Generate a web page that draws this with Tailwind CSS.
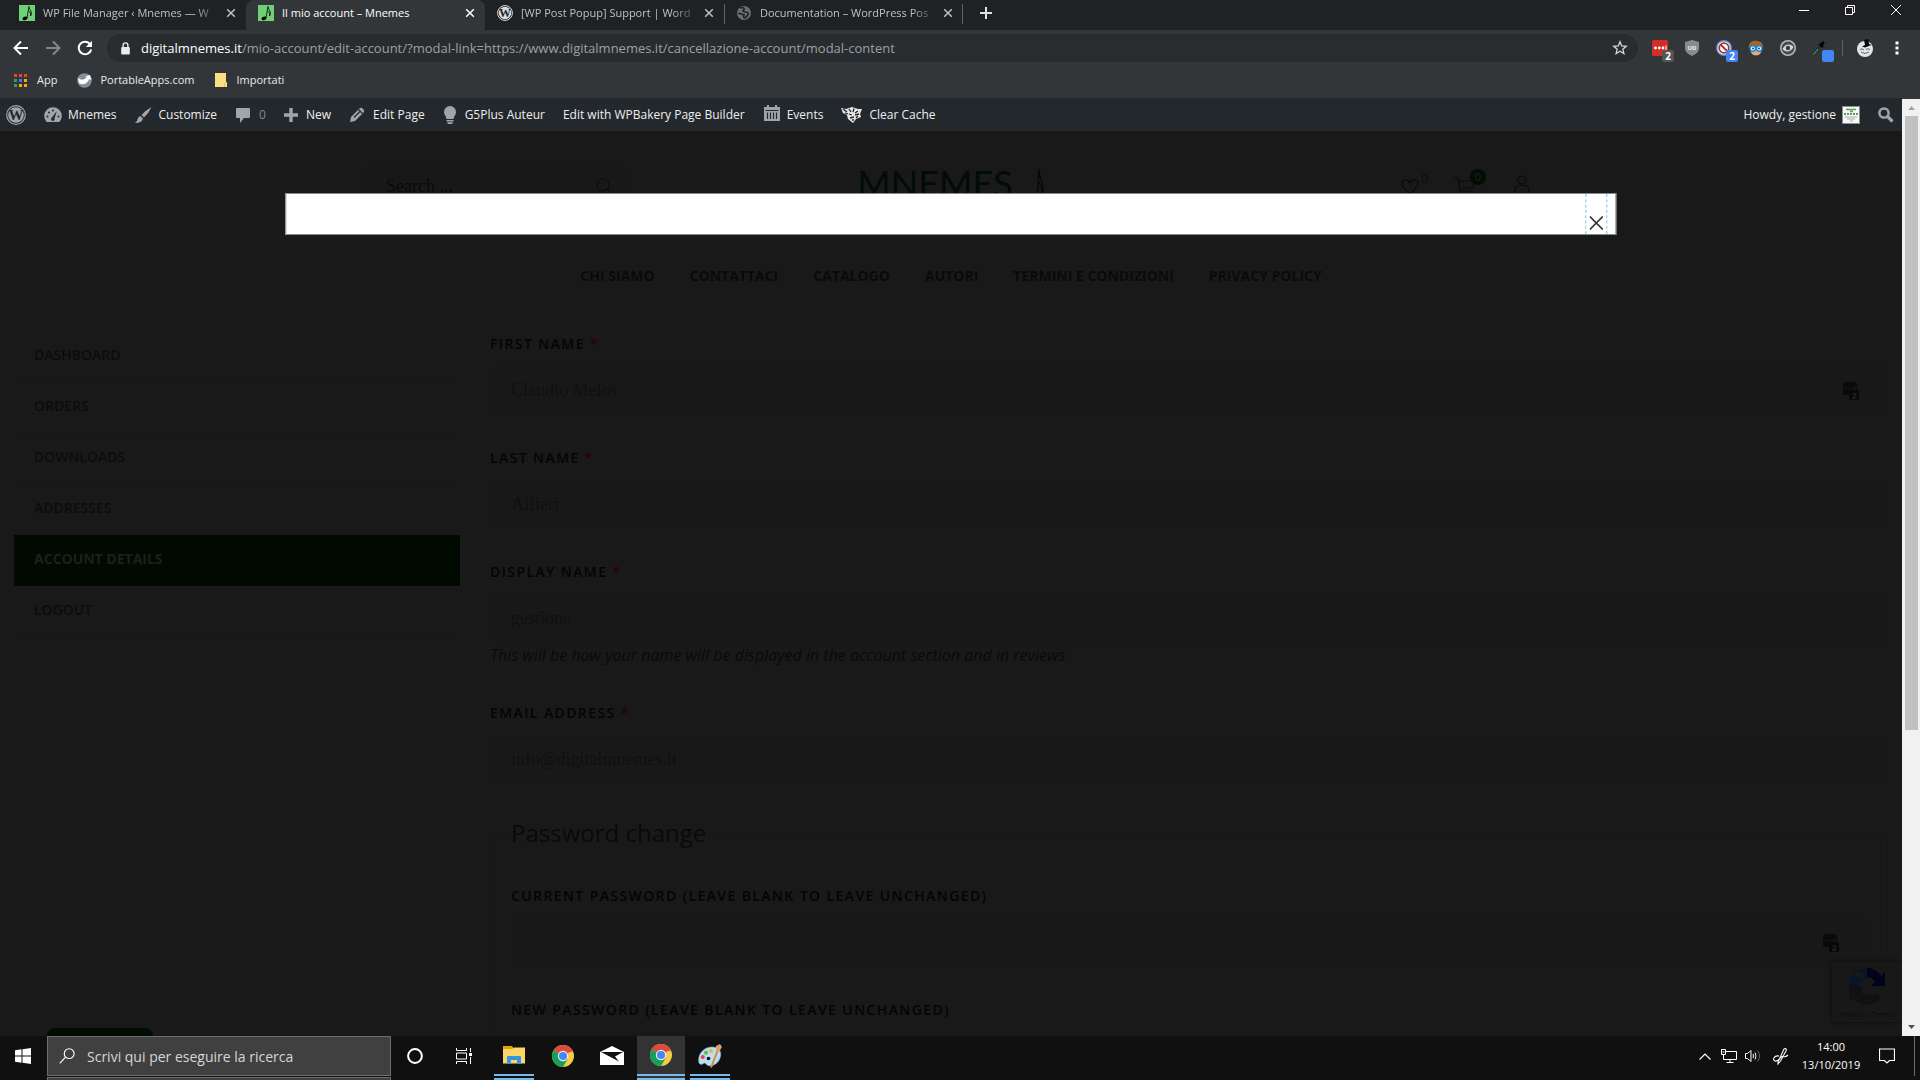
<!DOCTYPE html>
<html lang="it">

<head>
  <meta charset="UTF-8">
  <meta name="viewport" content="width=device-width, initial-scale=1.0">
  <title>Il mio account – Mnemes</title>
  <script src="https://cdn.jsdelivr.net/npm/@tailwindcss/browser@4"></script>
</head>

<body class="h-screen flex flex-col overflow-hidden bg-[#202124] font-['Open_Sans','Noto_Sans',sans-serif]">

  <!-- Shared icons -->
  <svg class="hidden">
    <symbol id="note" viewBox="0 0 16 16">
      <rect width="16" height="16" fill="#6fd076" />
      <ellipse cx="6" cy="13.3" rx="2.6" ry="1.7" fill="#000" transform="rotate(-20 6 13.3)" />
      <path d="M8 13 L10 1.5 C10 5 14 6 11.6 11 C12 7.5 10.6 6.5 9.8 6" fill="none" stroke="#000" stroke-width=".8" />
    </symbol>
    <symbol id="wp" viewBox="0 0 20 20">
      <circle cx="10" cy="10" r="9.3" fill="none" stroke="currentColor" stroke-width="1.2" />
      <circle cx="10" cy="10" r="7.8" fill="currentColor" />
      <text x="10" y="15" text-anchor="middle" font-family="Liberation Serif" font-weight="bold" font-size="15" fill="#23282d">W</text>
    </symbol>
    <symbol id="close" viewBox="0 0 10 10">
      <path d="M1.2 1.2 L8.8 8.8 M8.8 1.2 L1.2 8.8" stroke="currentColor" stroke-width="1.5" fill="none" />
    </symbol>
    <symbol id="chrome" viewBox="0 0 22 22">
      <circle cx="11" cy="11" r="11" fill="#f9cb45" />
      <path d="M11 11 L1.47 5.5 A11 11 0 0 1 20.53 5.5 Z" fill="#db4a3f" />
      <path d="M11 5.5 H20.53 A11 11 0 0 1 21 6.5 L11 8 Z" fill="#db4a3f" />
      <path d="M11 11 L1.47 5.5 A11 11 0 0 0 11 22 L15.8 13.7 Z" fill="#169f58" />
      <circle cx="11" cy="11" r="5.2" fill="#f1f1f1" />
      <circle cx="11" cy="11" r="4.1" fill="#4587f3" />
    </symbol>
    <symbol id="passkey" viewBox="0 0 17 18">
      <rect x="0" y="0" width="14" height="13" rx="2" fill="#0a0a0a" />
      <path d="M2 6.5 h2 M5.5 6.5 h2 M9 6.5 h1.5 M12 4 v5" stroke="#191919" stroke-width="1.5" />
      <rect x="6" y="8" width="10" height="10" rx="1.5" fill="#080808" />
      <text x="11" y="16.5" text-anchor="middle" font-size="9" font-weight="bold" fill="#222">2</text>
    </symbol>
  </svg>

  <!-- Tab strip -->
  <div class="h-[30px] shrink-0 flex items-stretch pl-[7px] text-[11px] text-[#bdc1c6]">
    <div class="w-[239px] flex items-center pl-3 pr-[5px] pb-1">
      <svg class="size-4 shrink-0"><use href="#note" /></svg>
      <span class="flex-1 ml-2 h-5 leading-5 overflow-hidden whitespace-nowrap mask-r-from-85%">WP File Manager ‹ Mnemes — W</span>
      <button class="size-5 grid place-items-center" aria-label="Close tab"><svg class="size-2.5"><use href="#close" /></svg></button>
    </div>
    <div class="w-[239px] flex items-center pl-3 pr-[5px] pb-1 bg-[#323639] text-white rounded-t-lg">
      <svg class="size-4 shrink-0"><use href="#note" /></svg>
      <span class="flex-1 ml-2 h-5 leading-5 overflow-hidden whitespace-nowrap">Il mio account – Mnemes</span>
      <button class="size-5 grid place-items-center" aria-label="Close tab"><svg class="size-2.5"><use href="#close" /></svg></button>
    </div>
    <div class="w-[239px] flex items-center pl-3 pr-[5px] pb-1">
      <svg class="size-4 shrink-0 text-[#dcdcdc]"><use href="#wp" /></svg>
      <span class="flex-1 ml-2 h-5 leading-5 overflow-hidden whitespace-nowrap mask-r-from-85%">[WP Post Popup] Support | Word</span>
      <button class="size-5 grid place-items-center" aria-label="Close tab"><svg class="size-2.5"><use href="#close" /></svg></button>
    </div>
    <div class="w-[239px] flex items-center pl-3 pr-[5px] pb-1 relative before:absolute before:left-0 before:top-1 before:h-5 before:w-px before:bg-[#5f6368] after:absolute after:right-0 after:top-1 after:h-5 after:w-px after:bg-[#5f6368]">
      <svg class="size-4 shrink-0" viewBox="0 0 16 16">
        <circle cx="8" cy="8" r="7" fill="#6b6e72" />
        <path d="M4 3 C7 2 9 3 8 5 C6 5 7 7 9 7 C13 7 13 9 11 11 C9 14 7 13 8 10 C6 9 4 9 2.5 8" fill="none" stroke="#202124" stroke-width="1.6" />
      </svg>
      <span class="flex-1 ml-2 h-5 leading-5 overflow-hidden whitespace-nowrap mask-r-from-85%">Documentation – WordPress Pos</span>
      <button class="size-5 grid place-items-center" aria-label="Close tab"><svg class="size-2.5"><use href="#close" /></svg></button>
    </div>
    <button class="w-[46px] pb-1 grid place-items-center" aria-label="New tab">
      <svg class="size-3" viewBox="0 0 12 12"><path d="M6 0 V12 M0 6 H12" stroke="#dee1e6" stroke-width="2" /></svg>
    </button>
    <div class="ml-auto flex pb-2.5 pr-px text-white">
      <button class="w-[46px] grid place-items-center" aria-label="Minimize"><svg class="size-2.5" viewBox="0 0 10 10"><path d="M0 5.5 H10" stroke="#fff" /></svg></button>
      <button class="w-[46px] grid place-items-center" aria-label="Restore"><svg class="size-2.5" viewBox="0 0 10 10"><path d="M.5 2.5 H7.5 V9.5 H.5 Z M2.5 2.5 V.5 H9.5 V7.5 H7.5" fill="none" stroke="#fff" /></svg></button>
      <button class="w-[46px] grid place-items-center" aria-label="Close"><svg class="size-2.5" viewBox="0 0 10 10"><path d="M0 0 L10 10 M10 0 L0 10" stroke="#fff" /></svg></button>
    </div>
  </div>

  <!-- Address bar -->
  <div class="h-[34px] shrink-0 flex items-center bg-[#323639] pl-[5px] pr-[7px] pt-1 pb-0.5">
    <button class="w-8 grid place-items-center" aria-label="Back"><svg class="size-4" viewBox="0 0 16 16"><path d="M15 8 H2 M8 1.5 L1.5 8 L8 14.5" fill="none" stroke="#fff" stroke-width="2" /></svg></button>
    <button class="w-8 grid place-items-center" aria-label="Forward"><svg class="size-4" viewBox="0 0 16 16"><path d="M1 8 H14 M8 1.5 L14.5 8 L8 14.5" fill="none" stroke="#85888b" stroke-width="2" /></svg></button>
    <button class="w-8 grid place-items-center" aria-label="Reload"><svg class="size-4" viewBox="0 0 16 16"><path d="M14.2 9.5 A6.3 6.3 0 1 1 12.8 3.8" fill="none" stroke="#fff" stroke-width="2" /><path d="M15 .8 V7 H8.8 Z" fill="#fff" /></svg></button>
    <div class="flex-1 ml-1.5 h-7 rounded-full bg-[#282c2f] flex items-center pl-[13px] pr-2.5">
      <svg class="w-[11px] h-[13px]" viewBox="0 0 10 12"><rect x="1" y="4.5" width="8" height="7" rx="1" fill="#e8eaed" /><path d="M2.8 5 V3 A2.2 2.2 0 0 1 7.2 3 V5" fill="none" stroke="#e8eaed" stroke-width="1.3" /></svg>
      <a href="#" class="flex-1 ml-2.5 text-[13px] leading-5 text-[#9aa0a6] whitespace-nowrap"><span class="text-white">digitalmnemes.it</span>/mio-account/edit-account/?modal-link=https://www.digitalmnemes.it/cancellazione-account/modal-content</a>
      <button aria-label="Bookmark"><svg class="size-4" viewBox="0 0 16 16"><path d="M8 1.8 L9.7 6 L14.2 6.3 L10.8 9.2 L11.9 13.7 L8 11.2 L4.1 13.7 L5.2 9.2 L1.8 6.3 L6.3 6 Z" fill="none" stroke="#d4d7da" stroke-width="1.3" /></svg></button>
    </div>
    <div class="flex items-center ml-1.5">
      <button class="w-8 relative grid place-items-center" aria-label="LastPass">
        <svg class="size-4" viewBox="0 0 16 16"><rect width="16" height="16" rx="1.5" fill="#d32d27" /><circle cx="3.5" cy="8" r="1.4" fill="#fff" /><circle cx="7.3" cy="8" r="1.4" fill="#fff" /><circle cx="11" cy="8" r="1.4" fill="#fff" /><path d="M14 5.5 V10.5" stroke="#fff" /></svg>
        <span class="absolute left-[18px] top-2.5 size-3 rounded-xs bg-[#555] text-white text-[10px] leading-3 font-bold text-center">2</span>
      </button>
      <button class="w-8 grid place-items-center" aria-label="uBlock">
        <svg class="size-4" viewBox="0 0 16 16"><path d="M8 0 L15 2 V8 C15 12 12 14 8 16 C4 14 1 12 1 8 V2 Z" fill="#8a8a8a" /><text x="8" y="9.5" text-anchor="middle" font-size="6" font-weight="bold" fill="#eee">UD</text></svg>
      </button>
      <button class="w-8 relative grid place-items-center" aria-label="Blocker">
        <svg class="size-4" viewBox="0 0 16 16"><circle cx="8" cy="8" r="8" fill="#4a90d9" /><circle cx="8" cy="8" r="6.6" fill="#fff" /><circle cx="8" cy="8" r="4.8" fill="none" stroke="#a8322c" stroke-width="1.8" /><path d="M4.5 4.5 L11.5 11.5" stroke="#a8322c" stroke-width="1.8" /></svg>
        <span class="absolute left-[18px] top-2.5 size-3 rounded-xs bg-[#4285f4] text-white text-[10px] leading-3 font-bold text-center">2</span>
      </button>
      <button class="w-8 grid place-items-center" aria-label="Glasses">
        <svg class="size-4" viewBox="0 0 16 16"><path d="M1 8 C0 2 5 0 9 1 C14 1 16 5 14.5 9 Z" fill="#a5661f" /><path d="M2 7 H14 C14 12 12 15.5 8 15.5 C4 15.5 2 12 2 7Z" fill="#e3a987" /><circle cx="4.8" cy="8.5" r="2.7" fill="#fff" stroke="#1b87d6" stroke-width="1.4" /><circle cx="11.2" cy="8.5" r="2.7" fill="#fff" stroke="#1b87d6" stroke-width="1.4" /><circle cx="5" cy="8.5" r="1" fill="#114f80" /><circle cx="11" cy="8.5" r="1" fill="#114f80" /></svg>
      </button>
      <button class="w-8 grid place-items-center" aria-label="Eye">
        <svg class="size-4" viewBox="0 0 16 16"><circle cx="8" cy="8" r="8" fill="#b9b9b9" /><circle cx="8" cy="8" r="6.5" fill="#4a4a4a" /><path d="M2.5 9 C5 3.5 11 3.5 13.5 7 C11 12.5 5 12.5 2.5 9Z" fill="#d6d6d6" /><circle cx="8" cy="8" r="2.2" fill="#3a3a3a" /></svg>
      </button>
      <button class="w-8 relative grid place-items-center" aria-label="Color picker">
        <svg class="size-4" viewBox="0 0 16 16"><path d="M1.5 14 L9 5" stroke="#123d22" stroke-width="2.2" /><path d="M1.5 14.5 L6 9" stroke="#4cae6b" /><path d="M7.5 4 L11 7 M9 5 L12 2" stroke="#000" stroke-width="2.5" /></svg>
        <span class="absolute left-[18px] top-2.5 size-3 rounded-xs bg-[#4285f4]"></span>
      </button>
      <span class="ml-1.5 w-px h-4 bg-[#5f6368]"></span>
      <button class="ml-1.5 w-8 grid place-items-center" aria-label="Profile">
        <svg class="size-[18px]" viewBox="0 0 18 18"><circle cx="9" cy="10" r="8" fill="#e4e4e4" /><path d="M8 1 L12.500 0 L13 5 L15.500 6 L9 8.500 L6 7.500 L9 6 Z" fill="#050505" /><path d="M4 10.5 Q6 9 8 11 M10 10.5 Q12 9 14 10.5 M5 13 Q9 16 13 13" fill="none" stroke="#666" /></svg>
      </button>
      <button class="w-8 grid place-items-center" aria-label="Menu">
        <svg class="w-1 h-3.5" viewBox="0 0 4 14"><path d="M.5 .5h3v3h-3z M.5 5.5h3v3h-3z M.5 10.5h3v3h-3z" fill="#fff" /></svg>
      </button>
    </div>
  </div>

  <!-- Bookmarks -->
  <div class="h-[34px] shrink-0 flex items-center gap-5 bg-[#323639] pl-3.5 pb-0.5 text-[11px] text-[#e8eaed]">
    <a href="#" class="flex items-center gap-2.5">
      <svg class="size-[13px]" viewBox="0 0 13 13"><path d="M0 0h3v3h-3z M5 0h3v3h-3z M10 0h3v3h-3z" fill="#ea4335" /><path d="M0 5h3v3h-3z M0 10h3v3h-3z" fill="#34a05a" /><path d="M5 5h3v3h-3z" fill="#2684fc" /><path d="M10 5h3v3h-3z M5 10h3v3h-3z M10 10h3v3h-3z" fill="#f9ab00" /></svg>App</a>
    <a href="#" class="flex items-center gap-2">
      <svg class="size-[15px]" viewBox="0 0 15 15"><circle cx="7.5" cy="7.5" r="7.3" fill="#83909b" /><path d="M1 5 Q6 9 10 4 L8 3.5 L13 2 L14.5 7 L12.5 6 Q8 14 2 10 Z" fill="#fff" /></svg>PortableApps.com</a>
    <a href="#" class="flex items-center gap-2.5">
      <svg class="w-3 h-3.5" viewBox="0 0 12 14"><path d="M0 0 H11 V9 H12 V14 H0 Z" fill="#fbdf83" /><path d="M11 9 L9.5 11.5 V14" stroke="#e5b93c" fill="none" /></svg>Importati</a>
  </div>

  <!-- Viewport -->
  <div class="flex-1 min-h-0 flex">
    <div class="flex-1 min-w-0 flex flex-col">

      <!-- Admin bar -->
      <nav class="h-[33px] shrink-0 flex items-center bg-[#23282d] text-[#eee] text-xs pt-px pl-1.5 pr-2 gap-[18px] whitespace-nowrap">
        <a href="#" aria-label="WordPress"><svg class="size-5 text-[#a0a5aa]"><use href="#wp" /></svg></a>
        <a href="#" class="flex items-center gap-1.5">
          <svg class="size-[18px]" viewBox="0 0 18 18"><path d="M2.5 16 A8.8 8.8 0 1 1 15.5 16 Z" fill="#a0a5aa" /><g fill="#23282d"><circle cx="3.5" cy="10.5" r="1" /><circle cx="5" cy="6.5" r="1" /><circle cx="9" cy="4.5" r="1" /><circle cx="14.5" cy="10.5" r="1" /><path d="M12.8 5 L10.5 12.5 A1.8 1.8 0 1 1 8 11.5 Z" /></g></svg>Mnemes</a>
        <a href="#" class="flex items-center gap-1.5">
          <svg class="size-[18px]" viewBox="0 0 18 18"><path d="M17.5 1 Q12 4 7.5 9 L10 11.5 Q15 7 17.5 1 Z M6.5 10 L9 12.5 Q8 17 1 17 Q3.5 15 3.8 12.5 Q4.5 10 6.5 10Z" fill="#a0a5aa" /></svg>Customize</a>
        <a href="#" class="flex items-center gap-2 text-[#85898d]">
          <svg class="size-4" viewBox="0 0 16 16"><path d="M2 1 H14 Q15 1 15 2 V10 Q15 11 14 11 H9 L5 16 V11 H2 Q1 11 1 10 V2 Q1 1 2 1Z" fill="#a0a5aa" /></svg>0</a>
        <a href="#" class="flex items-center gap-2">
          <svg class="size-3.5" viewBox="0 0 14 14"><path d="M7 0 V14 M0 7 H14" stroke="#a0a5aa" stroke-width="3.4" /></svg>New</a>
        <a href="#" class="flex items-center gap-2">
          <svg class="size-4" viewBox="0 0 16 16"><path d="M1 15 L2 10 L10.5 1.5 Q12 0 14 2 Q16 4 14.5 5.5 L6 14 Z" fill="#a0a5aa" /><path d="M5 10.5 L11 4.5 M9.5 2.5 L13.5 6.5" stroke="#23282d" stroke-width="1.2" /></svg>Edit Page</a>
        <a href="#" class="flex items-center gap-2">
          <svg class="w-3.5 h-[18px]" viewBox="0 0 14 18"><path d="M7 0 A6 6 0 0 1 13 6 Q13 8.5 11.5 10 L10.5 13 H3.5 L2.5 10 Q1 8.5 1 6 A6 6 0 0 1 7 0Z M3.5 14 H10.5 V15.5 H3.5Z M4.5 16.3 H9.5 V18 H4.5Z" fill="#a0a5aa" /></svg>G5Plus Auteur</a>
        <a href="#">Edit with WPBakery Page Builder</a>
        <a href="#" class="flex items-center gap-1.5">
          <svg class="size-[18px] mb-1" viewBox="0 0 18 18"><path d="M1 3 H17 V17 H1 Z M4 1 H6 V4 H4Z M12 1 H14 V4 H12Z" fill="#a0a5aa" /><path d="M2.5 6.5 H15.5 M4.5 8.5 V15 M7.5 8.5 V15 M10.5 8.5 V15 M13.5 8.5 V15" stroke="#23282d" stroke-width="1.2" /></svg>Events</a>
        <a href="#" class="flex items-center gap-1.5">
          <svg class="w-[22px] h-4" viewBox="0 0 22 16"><path d="M0 1 L5 2 L11 0 L17 2 L21 2 L19 7 L20 10 L15 12 L12 16 L7 12 L6 8 L2 6 Z" fill="#e6e6e6" /><path d="M2 2 L6 5 M8 2 L10 5 M13 1.5 L12 5 M17 4 L14 6 M8 7 L11 8 M14 8 L18 7 M9 11 L13 10 M11 13 L13 13 M4 6 L7 7 M17 9 L15 11" stroke="#222" stroke-width="1.3" /></svg>Clear Cache</a>
        <a href="#" class="ml-auto flex items-center gap-1.5">Howdy, gestione
          <svg class="size-[18px]" viewBox="0 0 18 18"><rect x=".5" y=".5" width="17" height="17" fill="#f4f7f3" stroke="#8c8f94" /><path d="M4 3.5 H14 M8 5.500 H11" stroke="#5f9a5e" stroke-width="1.3" /><path d="M2 8 H16" stroke="#5f9a5e" stroke-width="2" stroke-dasharray="2 1" /><path d="M3 11 H15 M5 13 H13 M8 15 H11" stroke="#999" stroke-width=".8" /></svg></a>
        <button aria-label="Search"><svg class="size-4" viewBox="0 0 16 16"><circle cx="6" cy="6" r="4.6" fill="none" stroke="#a0a5aa" stroke-width="2.5" /><path d="M9.5 9.5 L14.5 14.5" stroke="#a0a5aa" stroke-width="3.2" /></svg></button>
      </nav>

      <!-- Site -->
      <div class="flex-1 min-h-0 relative overflow-hidden bg-[#191919] text-[#0a0a0a]">
        <header class="h-[120px] grid grid-cols-[1fr_auto_1fr] items-start px-[366px]">
          <div class="mt-[31px] w-[260px] h-12 flex items-center bg-[#181818] pl-5 pr-3.5 justify-between">
            <input type="text" aria-label="Search" placeholder="Search ..." class="w-40 bg-transparent outline-none font-['Liberation_Serif',serif] text-lg placeholder:text-[#0a0a0a]">
            <button aria-label="Search"><svg class="size-4" viewBox="0 0 16 16"><circle cx="7" cy="7" r="6" fill="none" stroke="#0a0a0a" /><path d="M11 11 L15.5 15.5" stroke="#0a0a0a" /></svg></button>
          </div>
          <a href="#" class="mt-7 flex items-start gap-5 text-[#020c06]">
            <span class="text-4xl leading-[48px] font-normal font-['Lato',sans-serif]">MNEMES</span>
            <svg class="mt-2.5 w-3 h-12" viewBox="0 0 12 48"><path d="M3 46 L6 0 C6 12 13 16 9 28 C10 18 7 15 5 12" fill="none" stroke="#020c06" stroke-width="1.3" /></svg>
          </a>
          <div class="mt-[42px] justify-self-end flex items-start gap-[26px] pr-1.5">
            <a href="#" aria-label="Wishlist" class="flex items-start text-xs leading-3 gap-0.5"><svg class="mt-1.5 w-[18px] h-4" viewBox="0 0 18 16"><path d="M9 15 C3 10 1 7 1 4.5 C1 .5 7 -.5 9 4 C11 -.5 17 .5 17 4.5 C17 7 15 10 9 15Z" fill="none" stroke="#0a0a0a" stroke-width="1.2" /></svg>0</a>
            <a href="#" aria-label="Cart" class="relative"><svg class="mt-1 w-6 h-5" viewBox="0 0 24 20"><path d="M0 1 H4 L6 14 H19 M4.5 4 H21 L19 11 H5.500" fill="none" stroke="#0a0a0a" stroke-width="1.2" /></svg>
              <span class="absolute left-4 -top-1 size-4 rounded-full bg-[#010c02] text-[#222] text-[11px] leading-4 text-center">0</span></a>
            <a href="#" aria-label="Account" class="ml-2.5"><svg class="mt-0.5 w-4 h-5" viewBox="0 0 16 20"><circle cx="8" cy="5" r="4" fill="none" stroke="#0a0a0a" stroke-width="1.2" /><path d="M.6 18 Q.6 11 5 10.5 H11 Q15.4 11 15.4 18" fill="none" stroke="#0a0a0a" stroke-width="1.2" /></svg></a>
          </div>
        </header>

        <nav class="h-12 flex justify-center items-center gap-[35px] pt-px text-sm font-bold text-[#0a0a0a]">
          <a href="#">CHI SIAMO</a>
          <a href="#">CONTATTACI</a>
          <a href="#">CATALOGO</a>
          <a href="#">AUTORI</a>
          <a href="#">TERMINI E CONDIZIONI</a>
          <a href="#">PRIVACY POLICY</a>
        </nav>

        <div class="flex gap-[30px] px-3.5 pt-8">
          <nav class="w-[446px] shrink-0 flex flex-col text-sm font-semibold text-[#0c0c0c]">
            <a href="#" class="h-[51px] pl-5 leading-[48px] border-b border-[#171717]">DASHBOARD</a>
            <a href="#" class="h-[51px] pl-5 leading-[48px] border-b border-[#171717]">ORDERS</a>
            <a href="#" class="h-[51px] pl-5 leading-[48px] border-b border-[#171717]">DOWNLOADS</a>
            <a href="#" class="h-[51px] pl-5 leading-[48px]">ADDRESSES</a>
            <a href="#" class="h-[51px] pl-5 leading-[48px] bg-[#010a01] font-bold text-[#1d1f1d]">ACCOUNT DETAILS</a>
            <a href="#" class="h-[51px] pl-5 leading-[48px] border-b border-[#171717]">LOGOUT</a>
          </nav>

          <form class="flex-1 flex flex-col text-sm font-semibold text-[#040404]">
            <label for="first-name" class="h-6 leading-[26px] mb-[11px] tracking-widest">FIRST NAME <span class="text-[#2a0000]">*</span></label>
            <div class="relative mb-[31px]">
              <input id="first-name" type="text" value="Claudio Melos" class="block w-full h-12 px-[21px] bg-[#181818] text-[#101010] text-lg font-normal font-['Liberation_Serif',serif]">
              <svg class="absolute right-7 top-4 w-[17px] h-[18px]"><use href="#passkey" /></svg>
            </div>
            <label for="last-name" class="h-6 leading-[26px] mb-[11px] tracking-widest">LAST NAME <span class="text-[#2a0000]">*</span></label>
            <input id="last-name" type="text" value="Alfieri" class="h-12 px-[21px] mb-[31px] bg-[#181818] text-[#101010] text-lg font-normal font-['Liberation_Serif',serif]">
            <label for="display-name" class="h-6 leading-[26px] mb-[11px] tracking-widest">DISPLAY NAME <span class="text-[#2a0000]">*</span></label>
            <input id="display-name" type="text" value="gestione" class="h-12 px-[21px] bg-[#181818] text-[#101010] text-lg font-normal font-['Liberation_Serif',serif]">
            <p class="h-6 leading-[26px] mb-[34px] text-base italic font-normal text-[#0a0a0a]">This will be how your name will be displayed in the account section and in reviews</p>
            <label for="email" class="h-6 leading-[26px] mb-[11px] tracking-widest">EMAIL ADDRESS <span class="text-[#2a0000]">*</span></label>
            <input id="email" type="email" value="info@digitalmnemes.it" class="h-12 px-[21px] bg-[#181818] text-[#101010] text-lg font-normal font-['Liberation_Serif',serif]">
            <fieldset class="mt-[34px] px-5 border border-[#161616] flex flex-col">
              <legend class="h-8 leading-8 mb-[34px] text-2xl font-normal text-[#0a0a0a]">Password change</legend>
              <label for="current-password" class="h-6 leading-[26px] mb-[11px] tracking-widest">CURRENT PASSWORD (LEAVE BLANK TO LEAVE UNCHANGED)</label>
              <div class="relative mb-[31px]">
                <input id="current-password" type="password" class="block w-full h-12 px-[21px] bg-[#181818]">
                <svg class="absolute right-[27px] top-4 w-[17px] h-[18px]"><use href="#passkey" /></svg>
              </div>
              <label for="new-password" class="h-6 leading-[26px] mb-[11px] tracking-widest">NEW PASSWORD (LEAVE BLANK TO LEAVE UNCHANGED)</label>
              <input id="new-password" type="password" class="h-12 px-[21px] bg-[#181818]">
            </fieldset>
          </form>
        </div>

        <!-- Popup -->
        <div role="dialog" aria-label="Popup" class="absolute top-[62px] left-1/2 -translate-x-1/2 w-[70%] h-[42px] bg-white border border-[#8a8a8a] flex justify-end pr-2">
          <button class="w-[22px] border-x border-dashed border-[#7cc4e0] flex items-end justify-center pb-1" aria-label="Close popup">
            <svg class="size-3.5" viewBox="0 0 14 14"><path d="M.5 .5 L13.5 13.5 M13.5 .5 L.5 13.5" stroke="#333" stroke-width="1.7" /></svg>
          </button>
        </div>

        <!-- reCAPTCHA badge -->
        <div class="absolute right-0 bottom-3.5 w-[70px] h-[60px] bg-[#181818] shadow-[0_0_4px_#0a0a0a] text-center">
          <svg class="mx-auto mt-1.5 w-9 h-[38px]" viewBox="0 0 36 38"><path d="M0 18 C0 9 5 1 18 0 V8 L22 10 C16 9 12 12 10 18 Z M5 1 L5 6 L10 10 L16 10 L15 6Z" fill="#071526" /><path d="M18 0 C24 0 29 3 32 8 L36 4 V18 H22 L26 14 C24 10 21 9 18 9 Z" fill="#02021a" /><path d="M0 18 V33 L4 30 C14 40 27 38 32 29 L26 25 C22 29 15 28 12 24 L15 18 Z" fill="#111" /></svg>
          <span class="block pt-0.5 text-[8px] leading-3 text-[#0a0a0a]">Privacy - Terms</span>
        </div>
        <div class="absolute left-[47px] bottom-0 w-[106px] h-2 rounded-t-lg bg-[#010c02]"></div>
      </div>
    </div>

    <!-- Scrollbar -->
    <div class="w-[18px] shrink-0 flex flex-col items-center bg-[#f1f1f1] border-t border-[#323639]">
      <svg class="size-[17px]" viewBox="0 0 17 17"><path d="M5 11 L8.5 7 L12 11Z" fill="#a3a3a3" /></svg>
      <div class="w-[13px] h-[65.5%] bg-[#c1c1c1]"></div>
      <svg class="mt-auto size-[17px]" viewBox="0 0 17 17"><path d="M5 6 L8.5 10 L12 6Z" fill="#505050" /></svg>
    </div>
  </div>

  <!-- Taskbar -->
  <footer class="h-11 shrink-0 flex items-start bg-[#101010] text-white">
    <button class="w-[46px] h-10 grid place-items-center" aria-label="Start">
      <svg class="size-4" viewBox="0 0 16 16"><path d="M0 2.2 L6.5 1.3 V7.5 H0Z M7.5 1.2 L16 0 V7.5 H7.5Z M0 8.5 H6.5 V14.7 L0 13.8Z M7.5 8.5 H16 V16 L7.5 14.8Z" fill="#fff" /></svg>
    </button>
    <div class="w-[345px] pl-px flex flex-col gap-px">
      <label class="h-10 flex items-center bg-[#404040] border border-[#6e6e6e] pl-[11px] gap-3">
        <svg class="size-4" viewBox="0 0 17 17"><circle cx="10.8" cy="6" r="5.2" fill="none" stroke="#fff" stroke-width="1.2" /><path d="M7 9.8 L.8 16.3" stroke="#fff" stroke-width="1.2" /></svg>
        <input type="text" aria-label="Cerca" placeholder="Scrivi qui per eseguire la ricerca" class="flex-1 pt-0.5 bg-transparent outline-none text-sm placeholder:text-[#d6d6d6]">
      </label>
      <span class="h-[3px] bg-[#404040] border-t border-x border-[#6e6e6e]"></span>
    </div>
    <div class="flex gap-px pl-px">
      <button class="w-12 h-10 pr-0.5 grid place-items-center" aria-label="Cortana"><svg class="size-4" viewBox="0 0 16 16"><circle cx="8" cy="8" r="6.9" fill="none" stroke="#fff" stroke-width="2" /></svg></button>
      <button class="w-12 h-10 pr-0.5 grid place-items-center" aria-label="Task view"><svg class="size-4" viewBox="0 0 16 16"><path d="M.5 0 V2.5 H10.5 V0 M.5 5 H10.5 V11 H.5 Z M.5 16 V13.5 H10.5 V16 M14.5 0 V4 M14.5 9 V16" fill="none" stroke="#fff" /><path d="M13 5 h3 v3 h-3z" fill="#fff" /></svg></button>
      <button class="w-12 h-11 flex flex-col items-center justify-end gap-0.5" aria-label="Explorer">
        <svg class="mb-2 w-[22px] h-[18px]" viewBox="0 0 22 18"><path d="M0 0 H9 L10.5 2 H21 V4 H0Z" fill="#e3a008" /><path d="M0 3 H9 L11 1.5 H22 V17.5 H0Z" fill="#fcd667" /><path d="M4 18 V11 Q4 10 5 10 H17 Q18 10 18 11 V18 H14 V14 H8 V18Z" fill="#3a95dc" /></svg>
        <span class="w-10 h-0.5 bg-[#76b9ed]"></span><span class="w-10 h-0.5 bg-[#76b9ed]"></span>
      </button>
      <button class="w-12 h-10 grid place-items-center" aria-label="Chrome"><svg class="size-[22px]"><use href="#chrome" /></svg></button>
      <button class="w-12 h-10 grid place-items-center" aria-label="Mail"><svg class="w-6 h-5" viewBox="0 0 24 20"><path d="M0 6 L12 0 L24 6 V19 H0Z" fill="#fff" /><path d="M1 6 H23 L15 10.5 L19 15.5 Z" fill="#101010" /></svg></button>
      <button class="w-12 h-11 flex flex-col items-center justify-end gap-0.5 bg-[#333]" aria-label="Chrome, active">
        <svg class="mb-1.5 size-[22px]"><use href="#chrome" /></svg>
        <span class="w-12 h-0.5 bg-[#76b9ed]"></span><span class="w-12 h-0.5 bg-[#76b9ed]"></span>
      </button>
      <button class="w-12 h-11 flex flex-col items-center justify-end gap-0.5" aria-label="Paint">
        <svg class="mb-1 size-6" viewBox="0 0 24 24"><path d="M1 19 C-1 10 6 3 14 3 C22 3 24 9 22 14 C20 21 11 24 8 20 C6 17 4 23 1 19Z" fill="#b9dff2" stroke="#7fb5d2" stroke-width=".6" /><circle cx="4.8" cy="13" r="2" fill="#e2483e" /><circle cx="8" cy="8.8" r="2" fill="#5cb947" /><circle cx="13" cy="7" r="2" fill="#f2b52a" /><circle cx="10.5" cy="14.5" r="1.8" fill="#101010" /><path d="M13 23.5 L19.5 7" stroke="#d28b46" stroke-width="2" /><path d="M18 7 L18 2 L22 0 L24 3 L21 8Z" fill="#d9a36a" /></svg>
        <span class="w-10 h-0.5 bg-[#76b9ed]"></span><span class="w-10 h-0.5 bg-[#76b9ed]"></span>
      </button>
    </div>
    <div class="ml-auto h-10 flex items-center pr-[5px]">
      <button class="w-6 grid place-items-center" aria-label="Show hidden icons"><svg class="w-3 h-[7px]" viewBox="0 0 12 7"><path d="M.5 6.5 L6 1 L11.5 6.5" fill="none" stroke="#fff" stroke-width="1.2" /></svg></button>
      <button class="w-6 grid place-items-center" aria-label="Network"><svg class="w-4 h-3.5" viewBox="0 0 16 14"><path d="M5 2.5 H15.5 V10.5 H2.5 V6 M9 10.5 V13 M5.5 13.5 H12.5 M.5 .5 H4.5 V5.5 H.5Z M1.5 3 H3.5" fill="none" stroke="#fff" /></svg></button>
      <button class="w-6 grid place-items-center" aria-label="Volume"><svg class="w-4 h-3.5" viewBox="0 0 16 14"><path d="M.5 4.5 H2.5 L6 1.5 V12.5 L2.5 9.5 H.5Z M8 5 Q9 7 8 9 M10 3.5 Q12 7 10 10.5" fill="none" stroke="#fff" /><path d="M12.5 1.5 Q16.5 7 12.5 12.5" fill="none" stroke="#666" /></svg></button>
      <button class="w-8 grid place-items-center" aria-label="Ink"><svg class="w-4 h-[18px]" viewBox="0 0 16 18"><path d="M6 9 C1 8 -1 13 2 14 C5 15 6 12 8 10 C10 8 11 12 15 8 M5 15 L11 2 Q12.5 .5 13.5 3 L7.5 14 L5 17Z" fill="none" stroke="#fff" stroke-width="1.1" /></svg></button>
      <div class="w-[68px] text-center text-[11px] leading-[18px]">14:00<br>13/10/2019</div>
      <button class="w-[41px] pl-0.5 grid place-items-center" aria-label="Notifications"><svg class="size-4" viewBox="0 0 16 16"><path d="M.5 1 H15.5 V12.5 H10.5 L8 15 L5.5 12.5 H.5Z" fill="none" stroke="#fff" stroke-width="1.2" /></svg></button>
      <span class="ml-2 w-px h-10 bg-[#6a6a6a]"></span>
    </div>
  </footer>
</body>

</html>
